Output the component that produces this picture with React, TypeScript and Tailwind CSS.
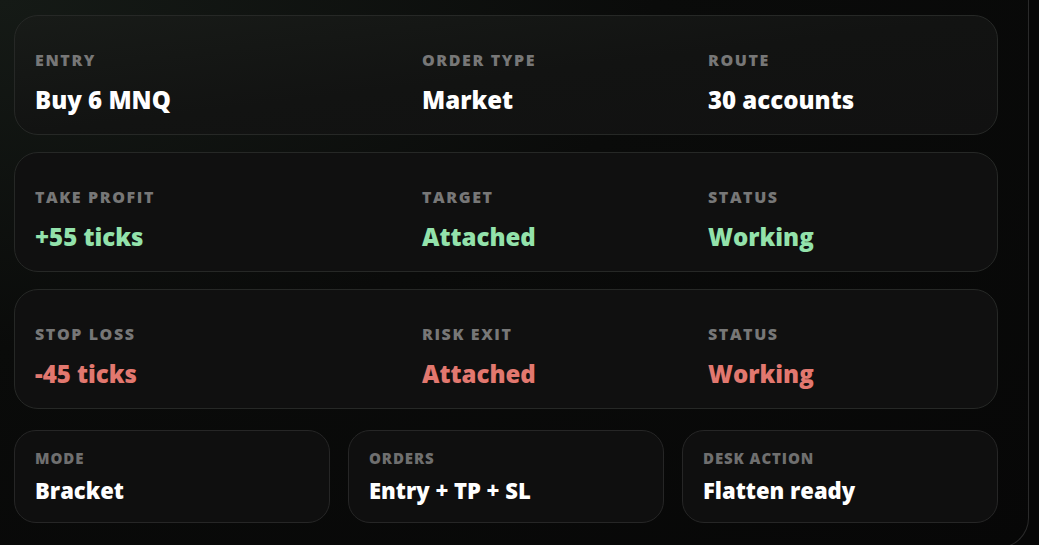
import React from "react";

type Tone = "white" | "green" | "red";

const toneClass: Record<Tone, string> = {
  white: "text-white",
  green: "text-[#93e2ab]",
  red: "text-[#e2786f]",
};

type Field = { label: string; value: string };

const rows: { tone: Tone; fields: Field[] }[] = [
  {
    tone: "white",
    fields: [
      { label: "Entry", value: "Buy 6 MNQ" },
      { label: "Order type", value: "Market" },
      { label: "Route", value: "30 accounts" },
    ],
  },
  {
    tone: "green",
    fields: [
      { label: "Take profit", value: "+55 ticks" },
      { label: "Target", value: "Attached" },
      { label: "Status", value: "Working" },
    ],
  },
  {
    tone: "red",
    fields: [
      { label: "Stop loss", value: "-45 ticks" },
      { label: "Risk exit", value: "Attached" },
      { label: "Status", value: "Working" },
    ],
  },
];

const summary: Field[] = [
  { label: "Mode", value: "Bracket" },
  { label: "Orders", value: "Entry + TP + SL" },
  { label: "Desk action", value: "Flatten ready" },
];

function LegCard({ tone, fields, first }: { tone: Tone; fields: Field[]; first?: boolean }) {
  return (
    <div
      className={
        "grid h-[120px] grid-cols-[369px_268px_1fr] gap-x-[18px] rounded-[24px] border border-[#262826] px-[20px] pt-[34px] " +
        (first ? "bg-gradient-to-br from-[#181b18] via-[#121312] to-[#111111]" : "bg-[#101010]")
      }
    >
      {fields.map((f, i) => (
        <div key={i} className="flex flex-col">
          <span className="text-[16px] font-extrabold uppercase leading-[20px] tracking-[0.1em] text-[#777777]">
            {f.label}
          </span>
          <span className={"mt-[15px] text-[24px] font-extrabold leading-[30px] " + toneClass[tone]}>
            {f.value}
          </span>
        </div>
      ))}
    </div>
  );
}

export default function App() {
  return (
    <div
      className="h-[545px] w-[1039px] overflow-hidden bg-[#070707]"
      style={{ fontFamily: '"Open Sans", "Noto Sans", sans-serif' }}
    >
      <div className="h-[548px] w-[1029px] rounded-br-[30px] border-r border-b border-[#2a2a2a] bg-[radial-gradient(ellipse_at_top_left,#151a16_0%,#0a0b0a_45%,#070707_100%)] pl-[14px] pr-[30px] pt-[15px]">
        <div className="flex flex-col gap-[17px]">
          {rows.map((r, i) => (
            <LegCard key={i} tone={r.tone} fields={r.fields} first={i === 0} />
          ))}
        </div>
        <div className="mt-[21px] grid grid-cols-3 gap-[18px]">
          {summary.map((f, i) => (
            <div
              key={i}
              className="flex h-[93px] flex-col rounded-[22px] border border-[#262626] bg-[#0f0f0f] px-[20px] pt-[18px]"
            >
              <span className="text-[15px] font-extrabold uppercase leading-[18px] tracking-[0.06em] text-[#6f6f6f]">
                {f.label}
              </span>
              <span className="mt-[9px] text-[22px] font-extrabold leading-[28px] text-white">{f.value}</span>
            </div>
          ))}
        </div>
      </div>
    </div>
  );
}
